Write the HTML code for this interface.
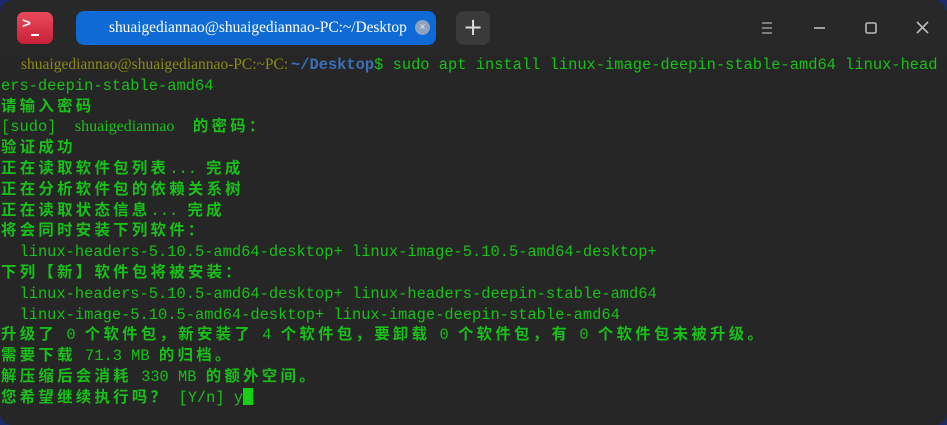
<!DOCTYPE html>
<html><head><meta charset="utf-8"><style>
html,body{margin:0;padding:0;width:947px;height:425px;overflow:hidden;background:#1c2a6a}
#win{position:absolute;left:0;top:0;width:947px;height:425px;background:#262626;border-radius:14px 14px 12px 12px;overflow:hidden}
#tb{position:absolute;left:0;top:0;width:947px;height:55px;background:#282828}
#logo{position:absolute;left:17px;top:12px;width:36px;height:32px;border-radius:7px;background:linear-gradient(#ea4a5a,#c8213a);color:#fff;font:bold 15px "Liberation Mono",monospace}
#tab{position:absolute;left:76px;top:11px;width:360px;height:34px;border-radius:8px;background:#0f6ad6;color:#fff;font:15px "Liberation Serif",serif;line-height:34px;white-space:nowrap}
#tab span{position:absolute;left:33px;top:0;font-size:15.4px}
#x{position:absolute;left:339px;top:9px;width:15px;height:15px;border-radius:50%;background:#8da4c0;color:#eee;font:10px sans-serif;line-height:15px;text-align:center}
#plus{position:absolute;left:456px;top:11px;width:34px;height:34px;border-radius:8px;background:#3a3a3a;color:#ddd;font:24px "DejaVu Sans",sans-serif;line-height:32px;text-align:center}
#term{position:absolute;left:1px;top:55px;font:15.4px "Liberation Mono","Noto Sans CJK SC",monospace;color:#19c019;white-space:pre;line-height:20.8px}
.p{font-family:"Liberation Serif",serif;color:#8a8a16;font-size:15.5px;display:inline-block;width:270px;padding-left:20px;white-space:nowrap}
.b{color:#3a6fb8;font-weight:bold}
.c{letter-spacing:3.3px;font-weight:bold}
.cur{background:#16d016;display:inline-block;width:10px;height:17px;vertical-align:-3px}
</style></head><body><div id="win">
<div id="tb">
<div id="logo"><span style="position:absolute;left:5px;top:4px">&gt;</span><span style="position:absolute;left:14px;top:22px;width:8px;height:2px;background:#fff"></span></div>
<div id="tab"><span>shuaigediannao@shuaigediannao-PC:~/Desktop</span><div id="x">×</div></div>
<div id="plus">+</div>
<svg style="position:absolute;left:755px;top:16px" width="180" height="26" fill="none" stroke="#bbb" stroke-width="1.6">
<path d="M7 7h10M7 12h10M7 17h10" stroke="#999"/>
<path d="M59 12h11"/>
<rect x="111" y="7" width="10" height="10" rx="1.5"/>
<path d="M162 6l11 11M173 6l-11 11"/>
</svg>
</div>
<div id="term"><span class="p">shuaigediannao@shuaigediannao-PC:~PC:</span><span class="b">~/Desktop</span>$ sudo apt install linux-image-deepin-stable-amd64 linux-head
ers-deepin-stable-amd64
<span class="c">请输入密码</span>
[sudo]  <span style="font-family:'Liberation Serif',serif;font-size:16px">shuaigediannao</span>  <span class="c">的密码：</span>
<span class="c">验证成功</span>
<span class="c">正在读取软件包列表</span>... <span class="c">完成</span>
<span class="c">正在分析软件包的依赖关系树</span>
<span class="c">正在读取状态信息</span>... <span class="c">完成</span>
<span class="c">将会同时安装下列软件：</span>
  linux-headers-5.10.5-amd64-desktop+ linux-image-5.10.5-amd64-desktop+
<span class="c">下列【新】软件包将被安装：</span>
  linux-headers-5.10.5-amd64-desktop+ linux-headers-deepin-stable-amd64
  linux-image-5.10.5-amd64-desktop+ linux-image-deepin-stable-amd64
<span class="c">升级了</span> 0 <span class="c">个软件包，新安装了</span> 4 <span class="c">个软件包，要卸载</span> 0 <span class="c">个软件包，有</span> 0 <span class="c">个软件包未被升级。</span>
<span class="c">需要下载</span> 71.3 MB <span class="c">的归档。</span>
<span class="c">解压缩后会消耗</span> 330 MB <span class="c">的额外空间。</span>
<span class="c">您希望继续执行吗？</span> [Y/n] y<span class="cur"></span></div>
</div></body></html>
